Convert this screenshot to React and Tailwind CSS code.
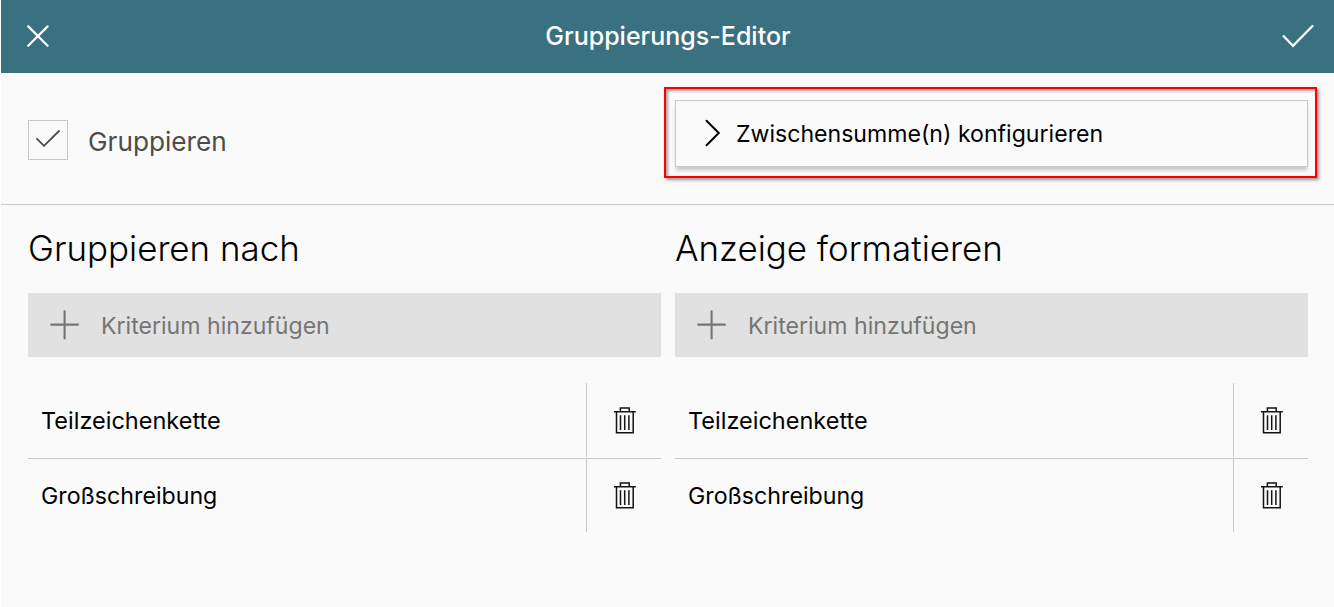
function CloseIcon() {
  return (
    <svg className="mb-[2px]" width="24" height="24" viewBox="0 0 24 24" fill="none" stroke="white" strokeWidth="2.2" strokeLinecap="round">
      <path d="M2.2 2.4 21.6 21.8M21.6 2.4 2.2 21.8" />
    </svg>
  );
}

function TrashIcon() {
  return (
    <svg width="22" height="28" viewBox="0 0 22 28" fill="none" stroke="#171213" strokeWidth="1.5">
      <path d="M-0.2 4.8H21.8M6.4 4.8V1H15.2V4.8M2.5 5V25.8H19.2V5" />
      <path d="M6.5 8.3V23M10.7 8.3V23M14.9 8.3V23" strokeWidth="1.5" />
    </svg>
  );
}

function Row({ label, last }) {
  return (
    <div className={last ? "flex h-[74px]" : "flex h-[76px] border-b border-[#cacaca]"}>
      <div
        className={
          last
            ? "flex-1 pl-[13px] pt-[19px] text-[23.2px] leading-[36px]"
            : "flex-1 pl-[13px] pt-[20px] text-[23.5px] leading-[36px]"
        }
      >
        {label}
      </div>
      <div
        className={
          last
            ? "mb-px flex w-[75px] justify-center border-l border-[#cacaca] pl-[2px] pt-[23px]"
            : "mb-px flex w-[75px] justify-center border-l border-[#cacaca] pl-[2px] pt-[24px]"
        }
      >
        <TrashIcon />
      </div>
    </div>
  );
}

function Column({ title, items }) {
  return (
    <section className="w-[633px]">
      <h2 className="h-[88px] pt-[19px] text-[34.9px] font-light leading-[48px]">{title}</h2>
      <button className="flex h-[64px] w-full items-center bg-[#e1e1e1] pl-[22px] text-[23.1px] text-[#757575]">
        <svg width="30" height="30" viewBox="0 0 30 30" fill="none" stroke="#757575" strokeWidth="2.1" strokeLinecap="round">
          <path d="M1.2 14.6H28M14.6 1.2V28.4" />
        </svg>
        <span className="ml-[21px] pt-[2px]">Kriterium hinzufügen</span>
      </button>
      <div className="mt-[26px]">
        {items.map((item, i) => (
          <Row key={item} label={item} last={i === items.length - 1} />
        ))}
      </div>
    </section>
  );
}

export default function App() {
  const items = ["Teilzeichenkette", "Großschreibung"];
  return (
    <div className="h-[607px] w-[1334px] overflow-hidden bg-white pl-px font-['Inter',sans-serif] text-black">
      <div className="h-full bg-[#fafafa]">
        <header className="flex h-[73px] items-center justify-between bg-[#3a7181] pl-[25px] pr-[20px] text-white">
          <CloseIcon />
          <h1 className="ml-[4px] text-[25px] font-medium">Gruppierungs-Editor</h1>
          <svg className="mb-[2px]" width="32" height="24" viewBox="0 0 32 24" fill="none" stroke="white" strokeWidth="2.3" strokeLinecap="round">
            <path d="M1.7 12.3 11 21.8 30.5 2" />
          </svg>
        </header>
        <div className="flex h-[132px] items-start justify-between border-b border-[#cacaca] pl-[27px] pr-[17px]">
          <label className="mt-[47px] flex items-center">
            <span className="flex h-[40px] w-[40px] items-center justify-center border border-[#c8c8c8]">
              <svg className="mb-[4px]" width="24" height="18" viewBox="0 0 24 18" fill="none" stroke="#4c4c4c" strokeWidth="1.8" strokeLinecap="round">
                <path d="M1 9.8 8 16.8 23 2" />
              </svg>
            </span>
            <span className="ml-[20px] pt-[4px] text-[26.2px] leading-[36px] text-[#4c4c4c]">Gruppieren</span>
          </label>
          <div className="mt-[14px] h-[91px] w-[653px] border-2 border-[#f00] px-[9px] py-[11px] shadow-[2px_2px_3px_rgba(0,0,0,0.4),inset_2px_2px_3px_rgba(0,0,0,0.35)]">
            <button className="flex h-[67px] w-[633px] items-center border border-[#cacaca] pl-[29px] text-[23.1px] shadow-[0_4px_4px_-1px_rgba(0,0,0,0.22)]">
              <svg className="mb-[2px]" width="16" height="28" viewBox="0 0 16 28" fill="none" stroke="black" strokeWidth="2" strokeLinecap="round">
                <path d="M1.5 1.8 13.8 14 1.5 26.2" />
              </svg>
              <span className="ml-[15px] pt-[2px]">Zwischensumme(n) konfigurieren</span>
            </button>
          </div>
        </div>
        <main className="flex gap-[14px] pl-[27px]">
          <Column title="Gruppieren nach" items={items} />
          <Column title="Anzeige formatieren" items={items} />
        </main>
      </div>
    </div>
  );
}
